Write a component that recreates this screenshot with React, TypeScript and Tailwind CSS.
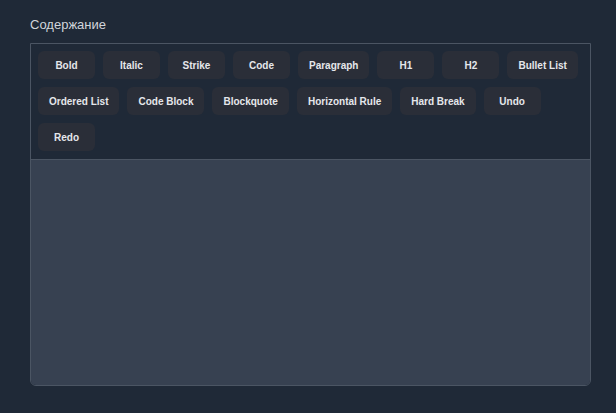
const tools = [
  "Bold",
  "Italic",
  "Strike",
  "Code",
  "Paragraph",
  "H1",
  "H2",
  "Bullet List",
  "Ordered List",
  "Code Block",
  "Blockquote",
  "Horizontal Rule",
  "Hard Break",
  "Undo",
  "Redo",
];

export default function App() {
  return (
    <div className="min-h-screen bg-[#1f2937] px-[30px] pt-[17px] font-['Liberation_Sans',Arial,sans-serif]">
      <label className="block text-[13px] leading-4 text-[#d1d5db] mb-[10px]">Содержание</label>
      <div className="w-[561px] border border-[#4b5563] rounded-b-md overflow-hidden">
        {/* Toolbar */}
        <div className="flex flex-wrap gap-2 px-[7px] pt-[7px] pb-2 border-b border-[#4b5563] bg-[#1f2937]">
          {tools.map((t) => (
            <button
              key={t}
              className="h-7 min-w-[57px] px-[11px] rounded-md bg-[#2a2e38] text-[10px] font-bold text-[#e5e7eb]"
            >
              {t}
            </button>
          ))}
        </div>
        {/* Editor */}
        <div className="h-[225px] bg-[#374151]" />
      </div>
    </div>
  );
}
